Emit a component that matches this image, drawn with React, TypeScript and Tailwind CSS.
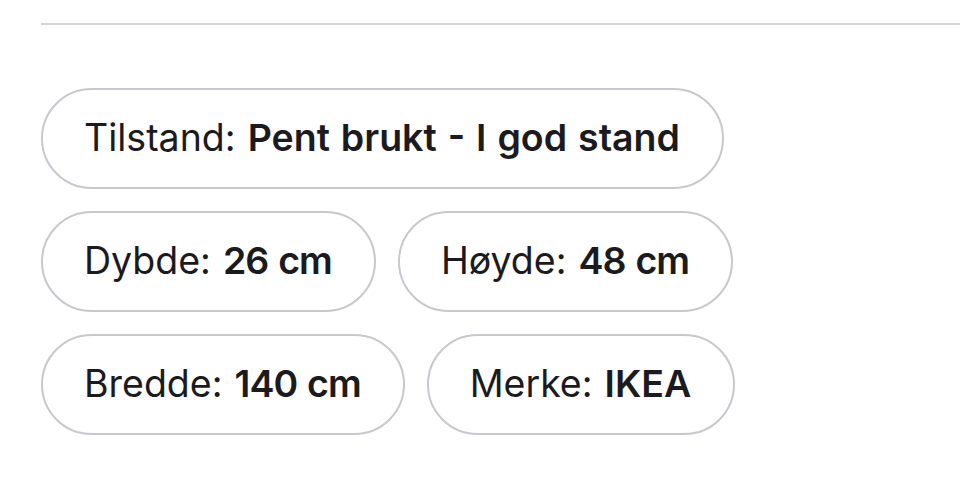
import React from "react";

function Pill({ label, value, tight }: { label: string; value: string; tight?: boolean }) {
  return (
    <div className="flex h-[101px] items-center rounded-full border-2 border-[#c8c8ce] pl-[41px] pr-[42px] text-[37.5px] text-[#1b1b1f] whitespace-nowrap [word-spacing:1.5px]">
      <span>{label}:&nbsp;</span>
      <span className={tight ? "font-semibold tracking-[-1px]" : "font-semibold"}>{value}</span>
    </div>
  );
}

export default function App() {
  return (
    <div className="h-[504px] w-[960px] bg-white pl-[41px] pt-[23px]" style={{ fontFamily: "Inter, 'Noto Sans', sans-serif" }}>
      <div className="h-[2px] w-full bg-[#d3d3d8]" />
      <div className="mt-[63px] flex flex-col items-start gap-[22px]">
        <Pill label="Tilstand" value="Pent brukt - I god stand" />
        <div className="flex gap-[22px]">
          <Pill label="Dybde" value="26 cm" tight />
          <Pill label="Høyde" value="48 cm" tight />
        </div>
        <div className="flex gap-[22px]">
          <Pill label="Bredde" value="140 cm" tight />
          <Pill label="Merke" value="IKEA" />
        </div>
      </div>
    </div>
  );
}
